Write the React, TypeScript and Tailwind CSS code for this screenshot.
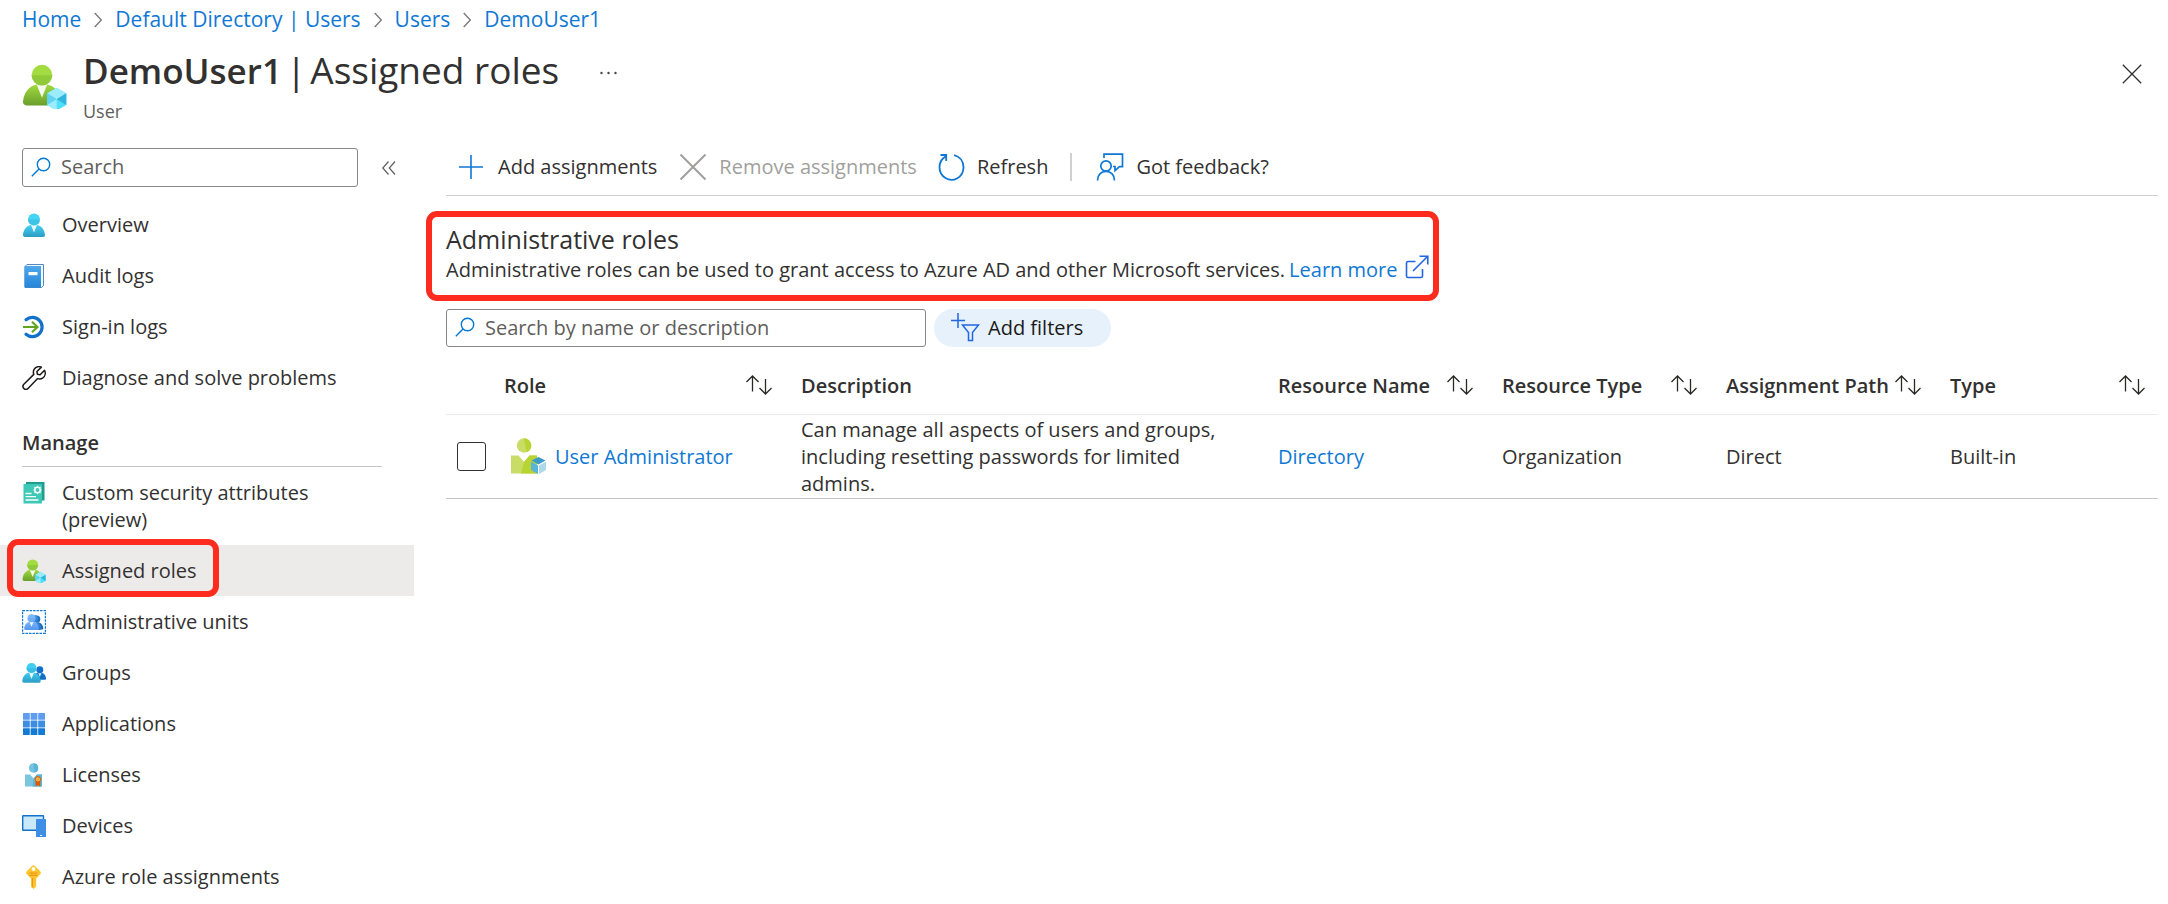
import type { ReactNode } from 'react';

const Person = ({ id, top, bottom, x = 0, y = 0, s = 1 }: { id: string; top: string; bottom: string; x?: number; y?: number; s?: number }) => (
  <g transform={`translate(${x} ${y}) scale(${s})`}>
    <defs>
      <linearGradient id={id} x1="0" y1="0" x2="0" y2="1">
        <stop offset="0" stopColor={top} />
        <stop offset="1" stopColor={bottom} />
      </linearGradient>
    </defs>
    <path d="M21 24H3a2 2 0 0 1-2-2.200C1.800 15 6 11.500 12 11.500S22.200 15 23 21.800A2 2 0 0 1 21 24Z" fill={`url(#${id})`} />
    <path d="M9 12l3 7.500 3-7.500c-2-1-4-1-6 0Z" fill="#fff" opacity=".9" />
    <circle cx="12" cy="6.500" r="6" fill={top} />
    <path d="M6 6.500a6 6 0 0 0 12 0Z" fill={bottom} opacity=".3" />
  </g>
);

const Hexagon = ({ x, y, s }: { x: number; y: number; s: number }) => (
  <g transform={`translate(${x} ${y}) scale(${s})`}>
    <path d="M10 0l9 5v11l-9 5-9-5V5Z" fill="#50e0fb" />
    <path d="M10 0l9 5-9 5.500L1 5Z" fill="#9cebff" />
    <path d="M1 5l9 5.500L1 16Z" fill="#5fd3f0" />
    <path d="M10 10.500L19 5v11Z" fill="#32b5dc" />
    <path d="M1 16l9-5.500V21Z" fill="#9cebff" />
  </g>
);

const Icon = ({ children, className = 'size-6', box = '0 0 24 24' }: { children: ReactNode; className?: string; box?: string }) => (
  <svg className={`shrink-0 ${className}`} viewBox={box} fill="none" aria-hidden="true">
    {children}
  </svg>
);

const UserRoleIcon = ({ id, className }: { id: string; className?: string }) => (
  <Icon className={className}>
    <Person id={id} top="#a3dc40" bottom="#689f2b" x={-0.400} y={0} s={0.920} />
    <Hexagon x={12.800} y={12.800} s={0.570} />
  </Icon>
);

const SearchIcon = () => (
  <Icon className="size-5" box="0 0 20 20">
    <g stroke="#0078d4" strokeWidth="1.4">
      <circle cx="12.500" cy="7.500" r="6.200" />
      <path d="M8 12l-7.200 7.200" />
    </g>
  </Icon>
);

const SortIcon = () => (
  <Icon className="h-5 w-7" box="0 0 28 20">
    <path d="M7.500 16.500V1M1.500 7l6-6 6 6M20.500 4v15M14.500 13l6 6 6-6" stroke="#292827" strokeWidth="1.300" />
  </Icon>
);

const topItems: { label: string; icon: ReactNode }[] = [
  { label: 'Overview', icon: <Icon><Person id="overview" top="#46d4f5" bottom="#2a9cc4" /></Icon> },
  {
    label: 'Audit logs',
    icon: (
      <Icon>
        <defs>
          <linearGradient id="book" x1="0" y1="0" x2="0" y2="1">
            <stop stopColor="#50a7ec" />
            <stop offset="1" stopColor="#2586d8" />
          </linearGradient>
        </defs>
        <path d="M5 .500h16.500v21l-2 2H3v-21Z" fill="#f1f8fe" stroke="#2a6cb0" strokeWidth=".8" />
        <path d="M2.500 3a1 1 0 0 1 1-1H19v21.500H3.500a1 1 0 0 1-1-1Z" fill="url(#book)" />
        <path d="M6.500 8h9v3.200h-9Z" fill="#fff" />
      </Icon>
    ),
  },
  {
    label: 'Sign-in logs',
    icon: (
      <Icon>
        <path d="M4 4.700a9.700 9.700 0 1 1 0 14.600" stroke="#1272c9" strokeWidth="3.200" strokeLinecap="round" />
        <path d="M1 12h14M10 6.700l5.500 5.300-5.500 5.300" stroke="#5fa51e" strokeWidth="2.100" />
      </Icon>
    ),
  },
  {
    label: 'Diagnose and solve problems',
    icon: (
      <Icon>
        <path d="M22.500 4.300l-4.400 4.400-2.700-.500-.500-2.700 4.500-4.400c-3-1.200-6 0-7.300 2.300-.900 1.700-.900 3.500-.300 5L1.600 18.500a3 3 0 0 0 4.200 4.200L15.600 12.600c1.700.600 3.700.400 5.300-.700 2.300-1.700 3-5 1.600-7.600Z" stroke="#1b1a19" strokeWidth="1.500" strokeLinejoin="round" />
      </Icon>
    ),
  },
];

const manageItems: { label: string; icon: ReactNode; selected?: boolean }[] = [
  {
    label: 'Custom security attributes (preview)',
    icon: (
      <Icon>
        <path d="M4 1h18.500v18.500H20L4 3Z" fill="#1f9c8c" />
        <path d="M1.500 3h18.500v19.500H1.500Z" fill="#3dc9b6" />
        <path d="M3.500 12.500h6M3.500 15.700h10.500M3.500 19h13" stroke="#fff" strokeWidth="1.300" />
        <circle cx="15.500" cy="9" r="2.700" stroke="#fff" strokeWidth="1.500" />
        <path d="M15.500 4.800v1.500M15.500 11.700v1.500M11.300 9h1.500M18.200 9h1.500M12.500 6l1.100 1.100M17.400 10.900l1.100 1.100M18.500 6l-1.100 1.100M13.600 10.900L12.500 12" stroke="#fff" strokeWidth="1.200" />
      </Icon>
    ),
  },
  { label: 'Assigned roles', icon: <UserRoleIcon id="assigned" />, selected: true },
  {
    label: 'Administrative units',
    icon: (
      <Icon>
        <rect x=".6" y=".6" width="22.800" height="22.800" stroke="#0f78d4" strokeWidth="1.200" strokeDasharray="2.500 1" />
        <Person id="unitBack" top="#1d72c4" bottom="#1b63ad" x={7.500} y={5.200} s={0.600} />
        <Person id="unitMiddle" top="#3c8be0" bottom="#2a74cb" x={4.500} y={4.600} s={0.640} />
        <Person id="unitFront" top="#7ab5fa" bottom="#5597ee" x={1.500} y={3.800} s={0.670} />
      </Icon>
    ),
  },
  {
    label: 'Groups',
    icon: (
      <Icon>
        <Person id="groupBack" top="#0b70cf" bottom="#126fc4" x={11} y={5} s={0.570} />
        <Person id="groupFront" top="#40cdf2" bottom="#2c9dc6" x={-0.600} y={1.500} s={0.840} />
      </Icon>
    ),
  },
  {
    label: 'Applications',
    icon: (
      <Icon>
        {[0, 1, 2].map((row) =>
          [0, 1, 2].map((col) => (
            <rect key={`${row}-${col}`} x={1 + col * 7.600} y={1 + row * 7.600} width="6.800" height="6.800" rx=".4" fill={['#5f9df0', '#3c8ee3', '#137ad6'][row]} />
          )),
        )}
      </Icon>
    ),
  },
  {
    label: 'Licenses',
    icon: (
      <Icon>
        <circle cx="11.500" cy="5" r="4.700" fill="#76c3dd" />
        <path d="M11.500.300a4.700 4.700 0 0 1 1 9.300Z" fill="#59b4d9" />
        <path d="M3 11.500h5l3.500 4 3.500-4h5v12H3Z" fill="#7cc5de" />
        <path d="M11.500 15.500l3.500-4h5v12h-9.500Z" fill="#59b4d9" />
        <path d="M13.500 17h4.800v6.800l-2.400-1.800-2.400 1.800Z" fill="#dd5900" />
        <circle cx="16" cy="16.300" r="2.700" fill="#fcae3e" stroke="#dd5900" strokeWidth="1" />
      </Icon>
    ),
  },
  {
    label: 'Devices',
    icon: (
      <Icon>
        <rect x=".7" y="1.700" width="20.800" height="14.600" rx=".5" fill="#c9e9fb" stroke="#1072cc" strokeWidth="1.400" />
        <rect x="14" y="5" width="10" height="18" rx=".6" fill="#3f8ee6" />
        <path d="M18 21.500h2" stroke="#fff" strokeWidth="1" />
      </Icon>
    ),
  },
  {
    label: 'Azure role assignments',
    icon: (
      <Icon>
        <path d="M9.800 1.200q1.700-1.800 3.400 0l5 5q1.300 1.500 0 3l-4 4.300v8L11.500 24 9 21.500V13.500L4.800 9.200q-1.300-1.500 0-3Z" fill="#fdc52d" />
        <path d="M10.500 13v9.500M7.500 8.200h8M7.500 10.400h8" stroke="#f0991c" strokeWidth="1.200" />
        <circle cx="11.500" cy="4" r="1.900" fill="#fff" />
      </Icon>
    ),
  },
];

const NavItem = ({ label, icon, selected }: { label: string; icon: ReactNode; selected?: boolean }) => (
  <li className={`relative ${selected ? 'bg-[#edebe9]' : ''}`}>
    <a href="#" className="flex gap-4 py-3 pr-12 pl-[22px]">
      <span className="flex h-[27px] items-center">{icon}</span>
      <span>{label}</span>
    </a>
    {selected && <span className="pointer-events-none absolute -top-1.5 left-[7px] h-[58px] w-[212px] rounded-[11px] border-6 border-[#fe2c1f]" />}
  </li>
);

const Crumb = ({ children }: { children: ReactNode }) => <a href="#" className="text-[#0f78d4]">{children}</a>;

const CrumbArrow = () => (
  <Icon className="h-4 w-2" box="0 0 8 16">
    <path d="M.700 1l6.600 7-6.600 7" stroke="#797775" strokeWidth="1.300" />
  </Icon>
);

const columns = [
  { label: 'Role', sort: true },
  { label: 'Description', sort: false },
  { label: 'Resource Name', sort: true },
  { label: 'Resource Type', sort: true },
  { label: 'Assignment Path', sort: true },
  { label: 'Type', sort: true },
];

export default function App() {
  return (
    <div className="bg-white font-['Open_Sans','Noto_Sans',sans-serif] text-[20px] leading-[27px] text-[#323130]">
      <nav aria-label="Breadcrumb" className="flex items-center gap-[13px] px-[22px] pt-1.5 text-[21px]">
        <Crumb>Home</Crumb>
        <CrumbArrow />
        <Crumb>Default Directory | Users</Crumb>
        <CrumbArrow />
        <Crumb>Users</Crumb>
        <CrumbArrow />
        <Crumb>DemoUser1</Crumb>
      </nav>

      <header className="flex items-start pt-[11px] pr-[26px] pl-[22px]">
        <UserRoleIcon id="header" className="mt-5 mr-4 size-[45px]" />
        <div>
          <div className="flex items-center">
            <h1 className="flex items-baseline gap-1 text-[37px] leading-[52px]">
              <span className="text-[35px] font-semibold">DemoUser1</span>
              <span>|</span>
              <span>Assigned roles</span>
            </h1>
            <button type="button" aria-label="More" className="mt-1 ml-10">
              <Icon className="h-1 w-5" box="0 0 20 4">
                <g fill="#484644">
                  <circle cx="2.500" cy="2" r="1.200" />
                  <circle cx="9.500" cy="2" r="1.200" />
                  <circle cx="16.500" cy="2" r="1.200" />
                </g>
              </Icon>
            </button>
          </div>
          <p className="text-[18px] leading-7 text-[#605e5c]">User</p>
        </div>
        <button type="button" aria-label="Close" className="mt-5 ml-auto">
          <Icon className="size-5" box="0 0 20 20">
            <path d="M.800.800l18.400 18.400M19.200.800L.800 19.200" stroke="#323130" strokeWidth="1.300" />
          </Icon>
        </button>
      </header>

      <div className="flex pt-[23px]">
        <aside className="w-[414px] shrink-0">
          <div className="flex items-center">
            <label className="ml-[22px] flex h-[39px] w-[336px] items-center gap-2.5 rounded-[3px] border border-[#8a8886] px-2 pb-0.5">
              <SearchIcon />
              <input type="search" aria-label="Search menu" placeholder="Search" className="w-full outline-none placeholder:text-[#605e5c]" />
            </label>
            <button type="button" aria-label="Collapse menu" className="ml-6">
              <Icon className="h-4 w-3.5" box="0 0 14 16">
                <path d="M6.500 1.500L.800 8l5.700 6.500M13 1.500L7.300 8l5.700 6.500" stroke="#605e5c" strokeWidth="1.200" />
              </Icon>
            </button>
          </div>
          <ul className="pt-3">
            {topItems.map((item) => <NavItem key={item.label} {...item} />)}
          </ul>
          <h2 className="mr-8 ml-[22px] border-b border-[#c8c6c4] pt-[26px] pb-2.5 font-semibold">Manage</h2>
          <ul>
            {manageItems.map((item) => <NavItem key={item.label} {...item} />)}
          </ul>
        </aside>

        <main className="min-w-0 grow pr-2.5 pl-8">
          <div className="flex h-12 items-start border-b border-[#d2d0ce]">
            <div className="flex h-[37px] items-center pl-3">
              <button type="button" className="flex items-center gap-3.5">
                <Icon className="size-[26px]" box="0 0 26 26">
                  <path d="M13 1v24M1 13h24" stroke="#0f78d4" strokeWidth="1.600" />
                </Icon>
                Add assignments
              </button>
              <button type="button" disabled className="ml-[22px] flex items-center gap-3 text-[#a19f9d]">
                <Icon className="size-7" box="0 0 28 28">
                  <path d="M1.500 1.500l25 25M26.500 1.500l-25 25" stroke="#a19f9d" strokeWidth="2" />
                </Icon>
                Remove assignments
              </button>
              <button type="button" className="ml-5 flex items-center gap-3">
                <Icon className="size-7" box="0 0 28 28">
                  <path d="M17 2.200C22.500 3.500 26.500 8 26.500 14.500A12 12.500 0 1 1 8.500 3.500M3.500 2H9.200V8" stroke="#0f78d4" strokeWidth="1.800" />
                </Icon>
                Refresh
              </button>
              <span className="mr-6 ml-[22px] h-7 w-0.5 bg-[#d2d0ce]" />
              <button type="button" className="flex items-center gap-3">
                <Icon className="size-7" box="0 0 28 28">
                  <g stroke="#0f78d4" strokeWidth="1.700">
                    <circle cx="10" cy="13" r="5.200" />
                    <path d="M1.500 27.500c0-5.500 3.500-9.200 8.500-9.200s8.500 3.700 8.500 9.200M8 5V1.200h18.500v12.500h-3l-4.500 4v-4.200h-2" />
                  </g>
                </Icon>
                Got feedback?
              </button>
            </div>
          </div>

          <section className="mt-[15px] -ml-5 w-fit rounded-[11px] border-6 border-[#fe2c1f] pt-1.5 pr-1 pb-3 pl-3.5">
            <h2 className="text-[25px] leading-8">Administrative roles</h2>
            <p className="flex items-center">
              Administrative roles can be used to grant access to Azure AD and other Microsoft services.
              <a href="#" className="ml-1 flex items-center gap-2 text-[#0f78d4]">
                Learn more
                <Icon className="mb-1 size-6">
                  <path d="M10.500 6.500H3A1.500 1.500 0 0 0 1.500 8v13A1.500 1.500 0 0 0 3 22.500h13a1.500 1.500 0 0 0 1.500-1.500v-7M8 16L22.500 1.500M14.500 1.200h8.300v8.300" stroke="#2266e3" strokeWidth="1.600" />
                </Icon>
              </a>
            </p>
          </section>

          <div className="mt-2 flex gap-2">
            <label className="flex h-[38px] w-[480px] items-center gap-2.5 rounded-[3px] border border-[#8a8886] px-2 pb-0.5">
              <SearchIcon />
              <input type="search" aria-label="Search roles" placeholder="Search by name or description" className="w-full outline-none placeholder:text-[#605e5c]" />
            </label>
            <button type="button" className="flex h-[38px] items-center gap-2 rounded-full bg-[#e6f1fb] pr-7 pb-0.5 pl-4 text-[#1b1a19]">
              <Icon className="h-[30px] w-[30px]" box="0 0 30 30">
                <path d="M8 1v15M1 8.500h14M12.500 13h16l-6 7.500v8h-4v-8l-6-7.500Z" stroke="#2266e3" strokeWidth="1.500" />
              </Icon>
              Add filters
            </button>
          </div>

          <table className="mt-3 w-full table-fixed border-collapse text-left">
            <colgroup>
              <col className="w-[58px]" />
              <col className="w-[297px]" />
              <col />
              <col className="w-[224px]" />
              <col className="w-[224px]" />
              <col className="w-[224px]" />
              <col className="w-[208px]" />
            </colgroup>
            <thead>
              <tr className="h-[55px] border-b border-[#edebe9]">
                <td />
                {columns.map(({ label, sort }) => (
                  <th key={label} scope="col" className="pr-7 pb-0.5 font-semibold last:pr-3">
                    <span className="flex items-center justify-between whitespace-nowrap">
                      {label}
                      {sort && <button type="button" aria-label={`Sort by ${label}`}><SortIcon /></button>}
                    </span>
                  </th>
                ))}
              </tr>
            </thead>
            <tbody>
              <tr className="h-[84px] border-b border-[#c8c6c4]">
                <td>
                  <input type="checkbox" aria-label="Select User Administrator" className="ml-[11px] block size-[29px] appearance-none rounded-[3px] border border-[#323130]" />
                </td>
                <td>
                  <span className="flex items-center gap-2 pl-[7px]">
                    <Icon className="size-9" box="0 0 36 36">
                      <circle cx="13" cy="7.500" r="7.200" fill="#c8dc66" />
                      <path d="M13 .300a7.200 7.200 0 0 1 2.500 14Z" fill="#b8d432" />
                      <path d="M0 17.500h7.500l5.500 6.500 5.500-6.500H26v18H0Z" fill="#c8dc66" />
                      <path d="M13 24l5.500-6.500H26v18H10Z" fill="#b8d432" />
                      <path d="M27.500 19l7 3.500-7 4-7-4Z" fill="#3e9ac6" />
                      <path d="M20 23.500l7 4V36l-7-4Z" fill="#59b4d9" />
                      <path d="M35 23.500l-7 4V36l7-4Z" fill="#acd9ec" />
                    </Icon>
                    <a href="#" className="text-[#0f78d4]">User Administrator</a>
                  </span>
                </td>
                <td className="pr-12">Can manage all aspects of users and groups, including resetting passwords for limited admins.</td>
                <td><a href="#" className="text-[#0f78d4]">Directory</a></td>
                <td>Organization</td>
                <td>Direct</td>
                <td>Built-in</td>
              </tr>
            </tbody>
          </table>
        </main>
      </div>
    </div>
  );
}
